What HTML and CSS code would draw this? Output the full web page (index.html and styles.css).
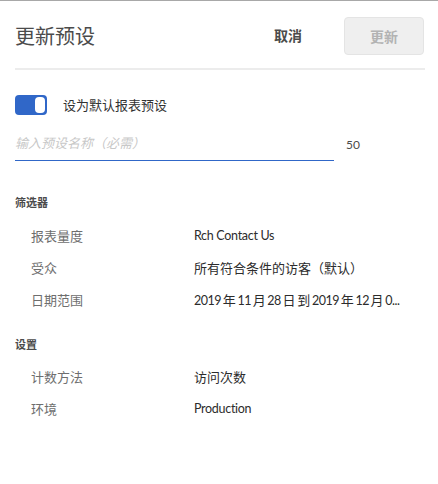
FILE: index.html
```html
<!DOCTYPE html>
<html lang="zh-CN">
<head>
<meta charset="utf-8">
<title>更新预设</title>
<link rel="stylesheet" href="styles.css">
</head>
<body>
<div class="dialog">
  <header class="header">
    <h1 class="title">更新预设</h1>
    <button class="btn-cancel">取消</button>
    <button class="btn-update" disabled>更新</button>
  </header>
  <div class="divider"></div>

  <div class="switch-row">
    <span class="switch"><span class="knob"></span></span>
    <span class="switch-label">设为默认报表预设</span>
  </div>

  <div class="name-row">
    <div class="name-input">输入预设名称（必需）</div>
    <span class="count">50</span>
  </div>

  <section class="section section-filters">
    <h2 class="section-title">筛选器</h2>
    <div class="row"><span class="label">报表量度</span><span class="value"><span class="en">Rch Contact Us</span></span></div>
    <div class="row"><span class="label">受众</span><span class="value">所有符合条件的访客（默认）</span></div>
    <div class="row"><span class="label">日期范围</span><span class="value value-date"><span class="en">2019 </span>年<span class="en"> 11 </span>月<span class="en"> 28 </span>日<span class="en"> </span>到<span class="en"> 2019 </span>年<span class="en"> 12 </span>月<span class="en"> 0...</span></span></div>
  </section>

  <section class="section section-settings">
    <h2 class="section-title">设置</h2>
    <div class="row"><span class="label">计数方法</span><span class="value">访问次数</span></div>
    <div class="row"><span class="label">环境</span><span class="value"><span class="en">Production</span></span></div>
  </section>
</div>
</body>
</html>
```

FILE: styles.css
```css
* { box-sizing: border-box; }
html, body { margin: 0; padding: 0; background: #fff; }
body {
  font-family: Lato, "Noto Sans CJK SC", sans-serif;
  color: #2c2c2c;
  border-top: 1px solid #a8a8a8;
  height: 484px;
}
.dialog {
  padding: 16px 13px 0 15px;
}
.header {
  display: flex;
  align-items: center;
  height: 38px;
}
.title {
  flex: 1;
  margin: 0;
  font-size: 20px;
  font-weight: 400;
  line-height: 38px;
  color: #4b4b4b;
}
.btn-cancel {
  font-family: inherit;
  background: none;
  border: none;
  padding: 0;
  margin-right: 42px;
  font-size: 14px;
  font-weight: 700;
  color: #4b4b4b;
  line-height: 20px;
}
.btn-update {
  font-family: inherit;
  width: 80px;
  height: 38px;
  margin-right: 1px;
  border: 1px solid #e4e4e4;
  border-radius: 4px;
  background: #efefef;
  color: #b3b3b3;
  font-size: 14px;
  font-weight: 700;
  padding: 0;
}
.divider {
  height: 2px;
  background: #ececec;
  margin-top: 13px;
}
.switch-row {
  display: flex;
  align-items: center;
  margin-top: 25px;
  height: 20px;
}
.switch {
  display: flex;
  justify-content: flex-end;
  width: 32px;
  height: 20px;
  padding: 2px;
  border-radius: 4px;
  background: #3067c8;
}
.knob {
  width: 10px;
  height: 16px;
  border-radius: 4px;
  background: #fff;
}
.switch-label {
  margin-left: 16px;
  font-size: 13px;
  line-height: 20px;
  color: #323232;
}
.name-row {
  display: flex;
  align-items: center;
  margin-top: 13px;
}
.name-input {
  width: 319px;
  height: 33px;
  border-bottom: 1px solid #3067c8;
  font-size: 13px;
  font-style: italic;
  line-height: 31px;
  color: #c8c8c8;
}
.count {
  margin-left: 12px;
  font-size: 12px;
  color: #4b4b4b;
}
.section-filters { margin-top: 34px; }
.section-settings { margin-top: 22px; }
.section-title {
  margin: 0 0 7px;
  font-size: 11px;
  font-weight: 700;
  line-height: 16px;
  color: #4b4b4b;
}
.section-filters .section-title { margin-bottom: 8px; }
.row {
  display: flex;
  align-items: center;
  height: 32px;
  padding-left: 16px;
  font-size: 13px;
}
.label {
  width: 163px;
  flex: none;
  color: #6e6e6e;
}
.value {
  white-space: pre;
  color: #2c2c2c;
}
.en {
  font-size: 12.5px;
  letter-spacing: -0.3px;
}
.value-date .en {
  letter-spacing: -0.5px;
  word-spacing: -1px;
}
```
